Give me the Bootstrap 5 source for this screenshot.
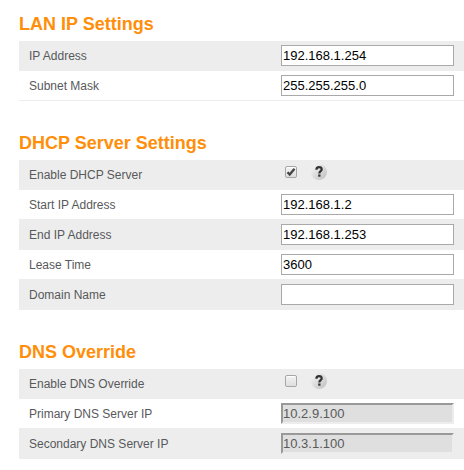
<!DOCTYPE html>
<html lang="en">
<head>
<meta charset="utf-8">
<meta name="viewport" content="width=device-width, initial-scale=1">
<title>LAN Settings</title>
<link href="https://cdn.jsdelivr.net/npm/bootstrap@5.3.0/dist/css/bootstrap.min.css" rel="stylesheet">
<style>
  body { font-family: "Liberation Sans", Arial, sans-serif; font-size: 12px; line-height: 18px; color: #58595b; background: #fff; }
  .settings-page { padding: 12px 0 10px 19px; }
  .settings-group + .settings-group { margin-top: 30px; }
  .group-title { font-size: 18px; line-height: 24px; font-weight: 700; color: #ff8f0a; margin-bottom: 5px; }
  .setting-row { height: 30px; padding: 0 10px; border-bottom: 1px solid #ededed; }
  .setting-row:nth-of-type(odd) { background: #ededed; }
  .setting-label { flex: 0 0 252px; }
  .setting-input { height: 21px; min-width: 0; padding: 0 1px; border: 1px solid #a9a9a9; background: #fff; color: #000; font-size: 13px; line-height: 19px; border-radius: 0; }
  .setting-input:disabled { border: 2px solid #ededed; border-top-color: #999; border-left-color: #999; background: #dfdfdf; color: #58595b; padding-left: 0; line-height: 17px; }
  .setting-check { appearance: none; width: 12px; height: 12px; margin: 0 14px 5px 4px; border: 1px solid #a6a6a6; border-radius: 2px; background: linear-gradient(#f2f2f2, #dedede); box-shadow: inset 0 1px 1px #fff; }
  .setting-check:checked { background: url("data:image/svg+xml,%3Csvg xmlns='http://www.w3.org/2000/svg' viewBox='0 0 10 10'%3E%3Cpath d='M1.500 5.200l2.200 2.300L8.500 1.700' fill='none' stroke='%23444' stroke-width='2.300'/%3E%3C/svg%3E") center / 10px 10px no-repeat, linear-gradient(#f2f2f2, #dedede); }
  .help-button { width: 16px; height: 16px; margin-bottom: 5px; border-radius: 50%; background: linear-gradient(135deg, #f0f0f0 15%, #bebebe); }
  .help-button svg { width: 16px; height: 16px; }
</style>
</head>
<body>
<main class="settings-page">
  <form>
    <section class="settings-group">
      <h2 class="group-title">LAN IP Settings</h2>
      <div class="setting-row d-flex align-items-center">
        <label class="setting-label" for="ip">IP Address</label>
        <input class="setting-input flex-grow-1" id="ip" type="text" value="192.168.1.254">
      </div>
      <div class="setting-row d-flex align-items-center">
        <label class="setting-label" for="mask">Subnet Mask</label>
        <input class="setting-input flex-grow-1" id="mask" type="text" value="255.255.255.0">
      </div>
    </section>

    <section class="settings-group">
      <h2 class="group-title">DHCP Server Settings</h2>
      <div class="setting-row d-flex align-items-center">
        <label class="setting-label" for="dhcp">Enable DHCP Server</label>
        <input class="setting-check" id="dhcp" type="checkbox" checked>
        <button class="help-button d-flex border-0 p-0" type="button" aria-label="Help: DHCP server">
          <svg viewBox="0 0 16 16" aria-hidden="true"><path d="M5.400 5.700C5.400 4 6.400 3.100 8 3.100s2.700.9 2.700 2.300C10.700 7.100 8.300 7.200 8.300 9.400" fill="none" stroke="#333" stroke-width="2.200"/><path d="M7.200 10.500h2.300v2.200H7.200z" fill="#333"/></svg>
        </button>
      </div>
      <div class="setting-row d-flex align-items-center">
        <label class="setting-label" for="start">Start IP Address</label>
        <input class="setting-input flex-grow-1" id="start" type="text" value="192.168.1.2">
      </div>
      <div class="setting-row d-flex align-items-center">
        <label class="setting-label" for="end">End IP Address</label>
        <input class="setting-input flex-grow-1" id="end" type="text" value="192.168.1.253">
      </div>
      <div class="setting-row d-flex align-items-center">
        <label class="setting-label" for="lease">Lease Time</label>
        <input class="setting-input flex-grow-1" id="lease" type="text" value="3600">
      </div>
      <div class="setting-row d-flex align-items-center">
        <label class="setting-label" for="domain">Domain Name</label>
        <input class="setting-input flex-grow-1" id="domain" type="text">
      </div>
    </section>

    <section class="settings-group">
      <h2 class="group-title">DNS Override</h2>
      <div class="setting-row d-flex align-items-center">
        <label class="setting-label" for="dns">Enable DNS Override</label>
        <input class="setting-check" id="dns" type="checkbox">
        <button class="help-button d-flex border-0 p-0" type="button" aria-label="Help: DNS override">
          <svg viewBox="0 0 16 16" aria-hidden="true"><path d="M5.400 5.700C5.400 4 6.400 3.100 8 3.100s2.700.9 2.700 2.300C10.700 7.100 8.300 7.200 8.300 9.400" fill="none" stroke="#333" stroke-width="2.200"/><path d="M7.200 10.500h2.300v2.200H7.200z" fill="#333"/></svg>
        </button>
      </div>
      <div class="setting-row d-flex align-items-center">
        <label class="setting-label" for="dns1">Primary DNS Server IP</label>
        <input class="setting-input flex-grow-1" id="dns1" type="text" value="10.2.9.100" disabled>
      </div>
      <div class="setting-row d-flex align-items-center">
        <label class="setting-label" for="dns2">Secondary DNS Server IP</label>
        <input class="setting-input flex-grow-1" id="dns2" type="text" value="10.3.1.100" disabled>
      </div>
    </section>
  </form>
</main>
<script src="https://cdn.jsdelivr.net/npm/bootstrap@5.3.0/dist/js/bootstrap.bundle.min.js"></script>
</body>
</html>
